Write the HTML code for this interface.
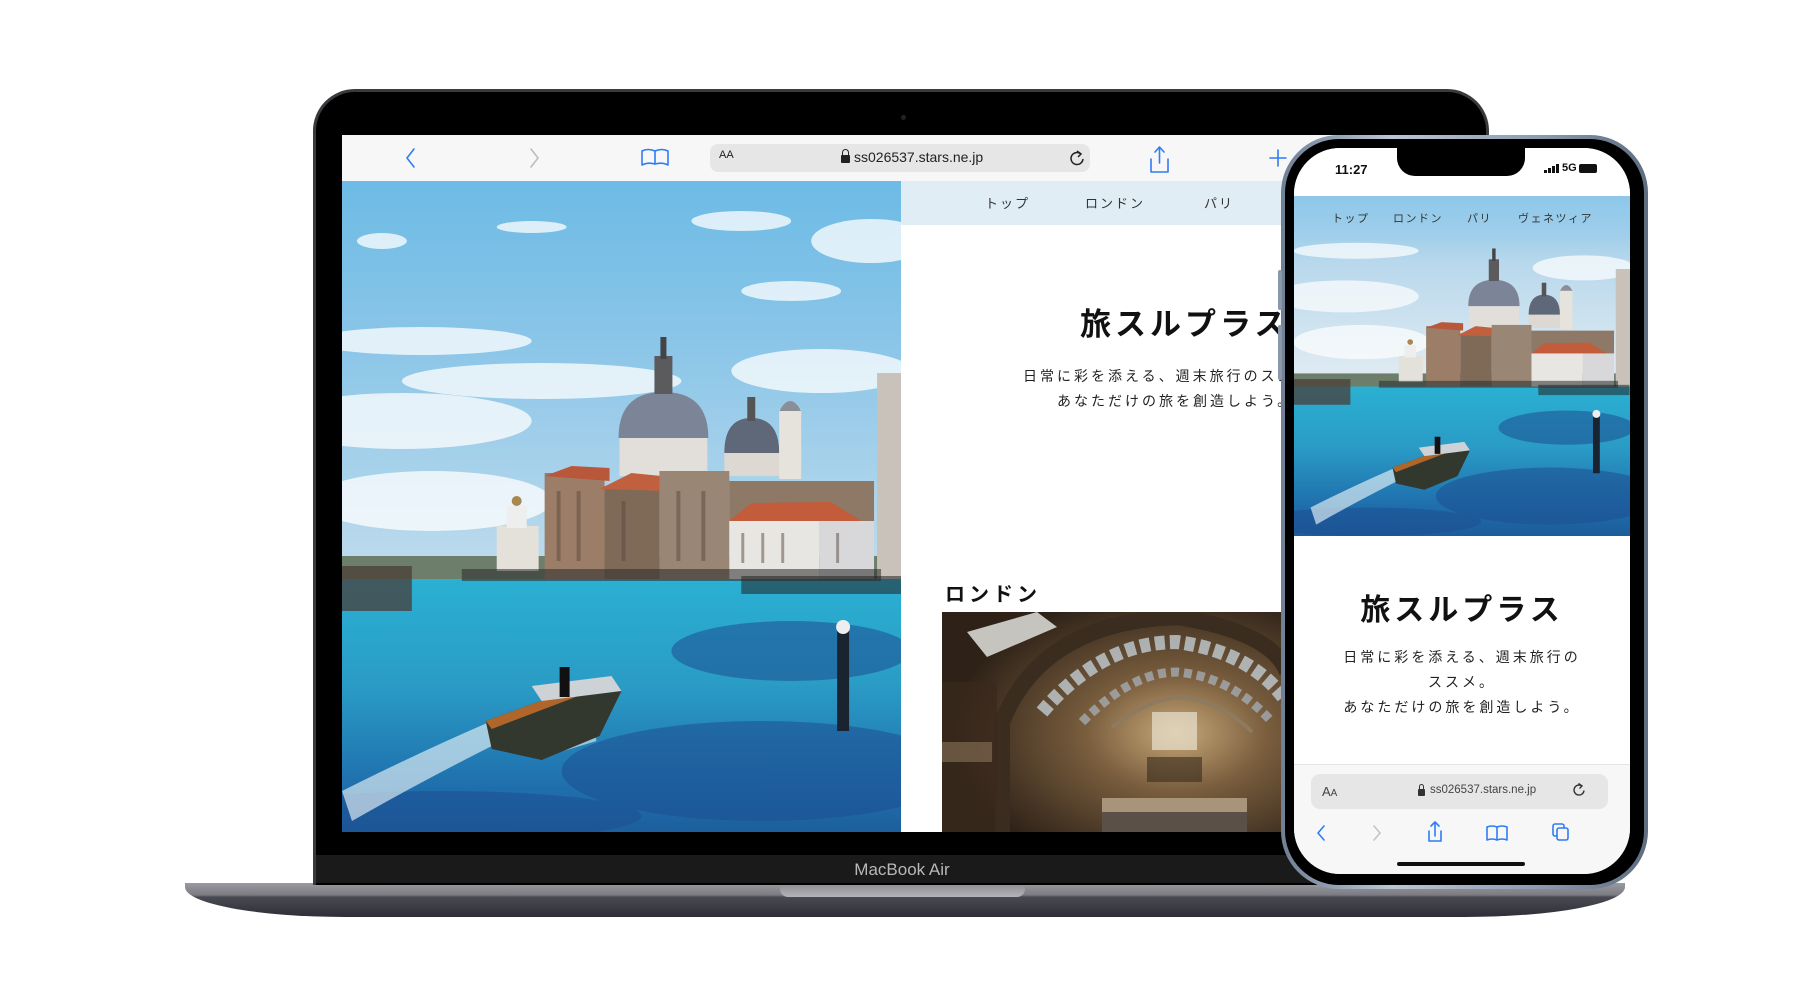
<!DOCTYPE html>
<html><head><meta charset="utf-8">
<style>
*{margin:0;padding:0;box-sizing:border-box}
body{width:1800px;height:1000px;background:#fff;position:relative;overflow:hidden;font-family:"Liberation Sans","Noto Sans CJK JP",sans-serif}
.abs{position:absolute}
.jp{font-family:"Liberation Sans","Noto Sans CJK JP",sans-serif}
</style></head><body>

<!-- laptop base -->
<div class="abs" style="left:185px;top:883px;width:1440px;height:34px;border-radius:0 0 160px 160px/0 0 30px 30px;background:linear-gradient(#9a9aa0 0,#7b7b82 12px,#4a4a52 14px,#2e2e36 100%)"></div>
<div class="abs" style="left:780px;top:883px;width:245px;height:14px;border-radius:0 0 8px 8px;background:linear-gradient(#8a8a90,#b4b4ba)"></div>

<!-- laptop lid -->
<div class="abs" style="left:313px;top:89px;width:1176px;height:796px;border-radius:42px 42px 0 0;background:#3a3a3e;"></div>
<div class="abs" style="left:316px;top:92px;width:1170px;height:793px;border-radius:39px 39px 0 0;background:#000;"></div>
<div class="abs" style="left:316px;top:855px;width:1170px;height:28px;background:#1a1a1a"></div>
<div class="abs" style="top:860px;color:#b8b8b8;font-size:17px;white-space:nowrap;width:240px;left:782px;text-align:center">MacBook Air</div>
<div class="abs" style="left:901px;top:115px;width:5px;height:5px;border-radius:50%;background:#222"></div>

<!-- laptop screen -->
<div class="abs" style="left:342px;top:135px;width:1128px;height:697px;background:#fff;overflow:hidden">
  <div class="abs" style="left:0;top:0;width:1128px;height:46px;background:#f7f7f7"></div>
  <svg class="abs" style="left:0;top:0" width="1128" height="46">
    <g fill="none" stroke="#2f7cf6" stroke-width="1.6" stroke-linecap="round" stroke-linejoin="round">
      <path d="M72 14 L65 23 L72 32"/>
      <path d="M300 16 L300 30 Q306 27 313 29 L313 16 Q306 13 300 16 Z M313 16 Q320 13 326 16 L326 30 Q320 27 313 29"/>
      <path d="M809 24 L809 37 L826 37 L826 24 M813 17 L817.5 12 L822 17 M817.5 12 L817.5 28"/>
      <path d="M928 23 L944 23 M936 15 L936 31"/>
    </g>
    <path d="M189 14 L196 23 L189 32" fill="none" stroke="#bdbdbd" stroke-width="1.6" stroke-linecap="round"/>
  </svg>
  <div class="abs" style="left:368px;top:9px;width:380px;height:28px;border-radius:8px;background:#e6e6e6"></div>
  <div class="abs" style="left:377px;top:14px;font-size:11px;color:#222">AA</div>
  <div class="abs" style="left:499px;top:20px;width:9px;height:8px;background:#222;border-radius:1px"></div>
  <div class="abs" style="left:500px;top:14px;width:7px;height:8px;border:1.5px solid #222;border-radius:4px 4px 0 0"></div>
  <div class="abs" style="left:512px;top:14px;font-size:14px;color:#222">ss026537.stars.ne.jp</div>
  <svg class="abs" style="left:726px;top:14px" width="18" height="18"><path d="M13 5 A6 6 0 1 0 15 10" fill="none" stroke="#222" stroke-width="1.5"/><path d="M9 2 L13 5 L10 8" fill="none" stroke="#222" stroke-width="1.5"/></svg>

  <!-- venice -->
  <svg class="abs" style="left:0;top:46px" width="559" height="651" viewBox="0 0 560 651" preserveAspectRatio="none">
    <defs>
      <linearGradient id="sky" x1="0" y1="0" x2="0" y2="1"><stop offset="0" stop-color="#5ab4e4"/><stop offset="0.3" stop-color="#8cc6e8"/><stop offset="0.65" stop-color="#d4e4ef"/><stop offset="1" stop-color="#e4edf3"/></linearGradient>
      <linearGradient id="wat" x1="0" y1="0" x2="0" y2="1"><stop offset="0" stop-color="#2ab0d2"/><stop offset="0.35" stop-color="#2a9cc6"/><stop offset="0.7" stop-color="#1f6eac"/><stop offset="1" stop-color="#1a4f8c"/></linearGradient>
    </defs>
    <rect x="-100" y="-100" width="800" height="900" fill="url(#sky)"/>
    <g fill="#fff" opacity="0.75"><ellipse cx="40" cy="60" rx="25" ry="8"/><ellipse cx="190" cy="46" rx="35" ry="6"/><ellipse cx="400" cy="40" rx="50" ry="10"/><ellipse cx="530" cy="60" rx="60" ry="22"/><ellipse cx="450" cy="110" rx="50" ry="10"/><ellipse cx="80" cy="160" rx="110" ry="14"/><ellipse cx="60" cy="240" rx="130" ry="28"/><ellipse cx="200" cy="200" rx="140" ry="18"/><ellipse cx="480" cy="190" rx="90" ry="22"/><ellipse cx="90" cy="320" rx="120" ry="30"/></g>
    <rect x="-100" y="375" width="800" height="25" fill="#6d7f6a"/>
    <!-- small church -->
    <rect x="155" y="345" width="42" height="45" fill="#e4e0da"/><rect x="165" y="325" width="20" height="22" fill="#eee"/><circle cx="175" cy="320" r="5" fill="#a88850"/>
    <!-- main dome -->
    <rect x="278" y="255" width="88" height="40" fill="#e2dfda"/>
    <path d="M277 257 Q277 211 322 211 Q367 211 367 257 Z" fill="#7b8597"/>
    <rect x="313" y="175" width="18" height="38" fill="#5b5b5e"/><rect x="319" y="156" width="6" height="22" fill="#444"/>
    <!-- second dome & tower -->
    <rect x="383" y="265" width="56" height="30" fill="#ddd8d2"/>
    <path d="M383 272 Q383 237 410 237 Q438 237 438 272 Z" fill="#5f6878"/>
    <rect x="406" y="216" width="8" height="24" fill="#555"/>
    <rect x="438" y="228" width="22" height="70" fill="#e6e2dc"/><path d="M438 230 Q449 210 460 230 Z" fill="#8a8e96"/>
    <!-- building row -->
    <rect x="203" y="292" width="60" height="108" fill="#9c7e68"/>
    <path d="M203 295 L230 285 L268 287 L268 300 Z" fill="#b9573a"/>
    <rect x="263" y="305" width="55" height="95" fill="#7f6a58"/>
    <path d="M258 308 L290 292 L330 296 L325 310 Z" fill="#c0603f"/>
    <rect x="318" y="290" width="70" height="110" fill="#9a8674"/>
    <rect x="388" y="300" width="145" height="40" fill="#8e7866"/>
    <path d="M388 340 L410 322 L490 321 L520 340 Z" fill="#c25c3a"/>
    <rect x="388" y="340" width="90" height="60" fill="#e8e6e2"/>
    <rect x="478" y="340" width="55" height="60" fill="#d8d8da"/>
    <g fill="#5a4a40" opacity="0.5"><rect x="215" y="310" width="4" height="70"/><rect x="235" y="310" width="4" height="70"/><rect x="280" y="320" width="4" height="60"/><rect x="335" y="310" width="4" height="70"/><rect x="360" y="310" width="4" height="70"/><rect x="400" y="352" width="3" height="30"/><rect x="420" y="352" width="3" height="30"/><rect x="440" y="352" width="3" height="30"/><rect x="495" y="352" width="3" height="30"/></g>
    <rect x="536" y="192" width="30" height="210" fill="#c8c2ba"/>
    <rect x="-100" y="398" width="800" height="300" fill="url(#wat)"/>
    <rect x="-40" y="385" width="110" height="45" fill="#4a3e38" opacity="0.75"/>
    <rect x="120" y="388" width="420" height="12" fill="#2a2a2a" opacity="0.55"/>
    <rect x="400" y="395" width="160" height="18" fill="#222" opacity="0.55"/>
    <g fill="#1d4f92" opacity="0.55"><ellipse cx="450" cy="470" rx="120" ry="30"/><ellipse cx="420" cy="590" rx="200" ry="50"/><ellipse cx="100" cy="635" rx="200" ry="25"/></g>
    <path d="M0 610 Q80 570 150 540 L160 560 Q80 600 10 640 Z" fill="#e8f2f8" opacity="0.65"/>
    <path d="M200 560 L250 540 L255 560 L205 575 Z" fill="#e8f2f8" opacity="0.6"/>
    <path d="M144 540 L240 505 L280 510 L258 555 L200 579 L150 568 Z" fill="#33382e"/>
    <path d="M144 540 L240 505 L250 510 L150 548 Z" fill="#b0652a"/>
    <path d="M190 505 L270 495 L280 510 L200 520 Z" fill="#ccd2d6"/>
    <rect x="218" y="486" width="10" height="30" fill="#111"/>
    <rect x="496" y="450" width="12" height="100" fill="#1a2430"/><circle cx="502" cy="446" r="7" fill="#eee"/>
  </svg>
  <div class="abs jp" style="left:559px;top:46px;width:569px;height:44px;background:#e0edf5;font-size:13px;color:#333">
    <span class="abs" style="left:84px;top:12px;letter-spacing:2px">トップ</span>
    <span class="abs" style="left:184px;top:12px;letter-spacing:2px">ロンドン</span>
    <span class="abs" style="left:303px;top:12px;letter-spacing:2px">パリ</span>
  </div>
  <div class="abs jp" style="left:738px;top:164px;font-size:31px;font-weight:bold;letter-spacing:4px;color:#111;white-space:nowrap">旅スルプラス</div>
  <div class="abs jp" style="left:681px;top:229px;font-size:14px;letter-spacing:3px;color:#222;white-space:nowrap;line-height:25px">日常に彩を添える、週末旅行のスス<br><span style="padding-left:34px">あなただけの旅を創造しよう。</span></div>
  <div class="abs jp" style="left:603px;top:443px;font-size:20px;font-weight:bold;letter-spacing:4px;color:#111">ロンドン</div>
  <!-- london image -->
  <svg class="abs" style="left:600px;top:477px" width="345" height="220">
    <defs><radialGradient id="lh" cx="0.68" cy="0.55" r="0.65"><stop offset="0" stop-color="#c8a878"/><stop offset="0.4" stop-color="#7a5e3e"/><stop offset="1" stop-color="#2e2218"/></radialGradient></defs>
    <rect width="345" height="220" fill="url(#lh)"/>
    <path d="M60 220 L60 110 Q100 10 235 5 Q330 20 345 60" fill="none" stroke="#3a2c1e" stroke-width="16"/>
    <path d="M100 100 Q160 30 235 30 Q310 40 345 90" fill="none" stroke="#c8d4dc" stroke-width="14" stroke-dasharray="10 5" opacity="0.75"/>
    <path d="M140 110 Q190 60 235 60 Q290 65 330 110" fill="none" stroke="#aebccc" stroke-width="9" stroke-dasharray="8 5" opacity="0.65"/>
    <path d="M170 115 Q210 85 240 85 Q280 90 310 120" fill="none" stroke="#8e7a60" stroke-width="4"/>
    <path d="M25 20 L95 0 L115 15 L45 45 Z" fill="#e0e0dc" opacity="0.85"/>
    <rect x="210" y="100" width="45" height="38" fill="#e8e2d0" opacity="0.7"/>
    <rect x="205" y="145" width="55" height="25" fill="#3a2c1e" opacity="0.6"/>
    <rect x="160" y="186" width="145" height="14" fill="#a89478"/>
    <rect x="160" y="200" width="145" height="20" fill="#5a5048"/>
    <rect x="0" y="70" width="55" height="150" fill="#3a2a1c" opacity="0.7"/>
    <rect x="0" y="130" width="50" height="20" fill="#8a7458" opacity="0.6"/>
  </svg>
</div>

<!-- phone -->
<div class="abs" style="left:1281px;top:135px;width:367px;height:754px;border-radius:58px;background:linear-gradient(90deg,#6f7f94,#b9c6d6 30%,#8d9cb0 70%,#5e6d80)"></div>
<div class="abs" style="left:1278px;top:270px;width:4px;height:40px;background:#8a98aa;border-radius:2px"></div>
<div class="abs" style="left:1278px;top:325px;width:4px;height:55px;background:#8a98aa;border-radius:2px"></div>
<div class="abs" style="left:1285px;top:139px;width:359px;height:746px;border-radius:54px;background:#000"></div>
<div class="abs" style="left:1294px;top:148px;width:336px;height:726px;border-radius:46px;background:#fff;overflow:hidden">
  <svg class="abs" style="left:0;top:48px" width="336" height="340" viewBox="-29 64 590 596" preserveAspectRatio="none">
    <defs>
      <linearGradient id="sky2" x1="0" y1="0" x2="0" y2="1"><stop offset="0" stop-color="#5ab4e4"/><stop offset="0.45" stop-color="#b8d8ec"/><stop offset="1" stop-color="#e4edf3"/></linearGradient>
      <linearGradient id="wat2" x1="0" y1="0" x2="0" y2="1"><stop offset="0" stop-color="#2ab0d2"/><stop offset="0.35" stop-color="#2a9cc6"/><stop offset="0.7" stop-color="#1f6eac"/><stop offset="1" stop-color="#1a4f8c"/></linearGradient>
    </defs>
    <rect x="-100" y="0" width="800" height="400" fill="url(#sky2)"/>
    <g fill="#fff" opacity="0.7"><ellipse cx="80" cy="160" rx="110" ry="14"/><ellipse cx="60" cy="240" rx="130" ry="28"/><ellipse cx="480" cy="190" rx="90" ry="22"/><ellipse cx="90" cy="320" rx="120" ry="30"/></g>
    <rect x="-100" y="375" width="800" height="25" fill="#6d7f6a"/>
    <rect x="155" y="345" width="42" height="45" fill="#e4e0da"/><rect x="165" y="325" width="20" height="22" fill="#eee"/><circle cx="175" cy="320" r="5" fill="#a88850"/>
    <rect x="278" y="255" width="88" height="40" fill="#e2dfda"/>
    <path d="M277 257 Q277 211 322 211 Q367 211 367 257 Z" fill="#7b8597"/>
    <rect x="313" y="175" width="18" height="38" fill="#5b5b5e"/><rect x="319" y="156" width="6" height="22" fill="#444"/>
    <rect x="383" y="265" width="56" height="30" fill="#ddd8d2"/>
    <path d="M383 272 Q383 237 410 237 Q438 237 438 272 Z" fill="#5f6878"/>
    <rect x="406" y="216" width="8" height="24" fill="#555"/>
    <rect x="438" y="228" width="22" height="70" fill="#e6e2dc"/><path d="M438 230 Q449 210 460 230 Z" fill="#8a8e96"/>
    <rect x="203" y="292" width="60" height="108" fill="#9c7e68"/>
    <path d="M203 295 L230 285 L268 287 L268 300 Z" fill="#b9573a"/>
    <rect x="263" y="305" width="55" height="95" fill="#7f6a58"/>
    <path d="M258 308 L290 292 L330 296 L325 310 Z" fill="#c0603f"/>
    <rect x="318" y="290" width="70" height="110" fill="#9a8674"/>
    <rect x="388" y="300" width="145" height="40" fill="#8e7866"/>
    <path d="M388 340 L410 322 L490 321 L520 340 Z" fill="#c25c3a"/>
    <rect x="388" y="340" width="90" height="60" fill="#e8e6e2"/>
    <rect x="478" y="340" width="55" height="60" fill="#d8d8da"/>
    <rect x="536" y="192" width="30" height="210" fill="#c8c2ba"/>
    <rect x="-100" y="398" width="800" height="300" fill="url(#wat2)"/>
    <rect x="-40" y="385" width="110" height="45" fill="#4a3e38" opacity="0.75"/>
    <rect x="120" y="388" width="420" height="12" fill="#2a2a2a" opacity="0.55"/>
    <rect x="400" y="395" width="160" height="18" fill="#222" opacity="0.55"/>
    <g fill="#1d4f92" opacity="0.55"><ellipse cx="450" cy="470" rx="120" ry="30"/><ellipse cx="420" cy="590" rx="200" ry="50"/><ellipse cx="100" cy="635" rx="200" ry="25"/></g>
    <path d="M0 610 Q80 570 150 540 L160 560 Q80 600 10 640 Z" fill="#e8f2f8" opacity="0.65"/>
    <path d="M144 540 L240 505 L280 510 L258 555 L200 579 L150 568 Z" fill="#33382e"/>
    <path d="M144 540 L240 505 L250 510 L150 548 Z" fill="#b0652a"/>
    <path d="M190 505 L270 495 L280 510 L200 520 Z" fill="#ccd2d6"/>
    <rect x="218" y="486" width="10" height="30" fill="#111"/>
    <rect x="496" y="450" width="12" height="100" fill="#1a2430"/><circle cx="502" cy="446" r="7" fill="#eee"/>
  </svg>
  <div class="abs" style="left:0;top:0;width:336px;height:48px;background:#fff"></div>
  <div class="abs" style="left:103px;top:-2px;width:128px;height:30px;background:#000;border-radius:0 0 18px 18px"></div>
  <div class="abs" style="left:41px;top:14px;font-size:13px;font-weight:bold;color:#111">11:27</div>
  <div class="abs" style="left:250px;top:22px;width:3px;height:3px;background:#111"></div>
  <div class="abs" style="left:254px;top:20px;width:3px;height:5px;background:#111"></div>
  <div class="abs" style="left:258px;top:18px;width:3px;height:7px;background:#111"></div>
  <div class="abs" style="left:262px;top:16px;width:3px;height:9px;background:#111"></div>
  <div class="abs" style="left:268px;top:14px;font-size:11px;font-weight:bold;color:#111">5G</div>
  <div class="abs" style="left:285px;top:16px;width:18px;height:9px;background:#111;border-radius:2px"></div>
  <div class="abs" style="left:0;top:48px;width:336px;height:42px;background:rgba(160,205,235,0.5)"></div>
  <div class="abs jp" style="left:0;top:62px;width:336px;font-size:11px;color:#333;letter-spacing:1.5px">
    <span class="abs" style="left:38px">トップ</span>
    <span class="abs" style="left:99px">ロンドン</span>
    <span class="abs" style="left:173px">パリ</span>
    <span class="abs" style="left:224px">ヴェネツィア</span>
  </div>
  <div class="abs jp" style="left:0;top:437px;width:336px;text-align:center;font-size:30px;font-weight:bold;letter-spacing:4px;color:#111">旅スルプラス</div>
  <div class="abs jp" style="left:0;top:497px;width:336px;text-align:center;font-size:14px;letter-spacing:3px;color:#222;line-height:25px">日常に彩を添える、週末旅行の<br>ススメ。<br>あなただけの旅を創造しよう。</div>
  <div class="abs" style="left:0;top:616px;width:336px;height:110px;background:#f7f7f7;border-top:1px solid #e3e3e3"></div>
  <div class="abs" style="left:17px;top:626px;width:297px;height:35px;border-radius:9px;background:#e6e6e6"></div>
  <div class="abs" style="left:28px;top:636px;font-size:13px;color:#444">A<span style="font-size:10px">A</span></div>
  <div class="abs" style="left:124px;top:641px;width:7px;height:7px;background:#333;border-radius:1px"></div>
  <div class="abs" style="left:125px;top:636px;width:5px;height:6px;border:1.3px solid #333;border-radius:3px 3px 0 0"></div>
  <div class="abs" style="left:136px;top:636px;font-size:11.5px;color:#444">ss026537.stars.ne.jp</div>
  <svg class="abs" style="left:277px;top:634px" width="16" height="16"><path d="M11 4 A5 5 0 1 0 13 8.5" fill="none" stroke="#333" stroke-width="1.4"/><path d="M7.5 1.5 L11 4 L8.5 6.5" fill="none" stroke="#333" stroke-width="1.4"/></svg>
  <svg class="abs" style="left:0;top:670px" width="336" height="30">
    <g fill="none" stroke="#2f7cf6" stroke-width="1.6" stroke-linecap="round" stroke-linejoin="round">
      <path d="M30 8 L24 15 L30 22"/>
      <path d="M135 13 L135 23 L147 23 L147 13 M137 8 L141 4 L145 8 M141 4 L141 18"/>
      <path d="M193 9 L193 22 Q198 20 203 22 L203 9 Q198 7 193 9 Z M203 9 Q208 7 213 9 L213 22 Q208 20 203 22"/>
      <rect x="259" y="6" width="11" height="12" rx="2"/><rect x="263" y="10" width="11" height="12" rx="2" fill="#f7f7f7"/>
    </g>
    <path d="M80 8 L86 15 L80 22" fill="none" stroke="#c4c4c4" stroke-width="1.6" stroke-linecap="round"/>
  </svg>
  <div class="abs" style="left:103px;top:714px;width:128px;height:4px;border-radius:2px;background:#111"></div>
</div>
</body></html>
